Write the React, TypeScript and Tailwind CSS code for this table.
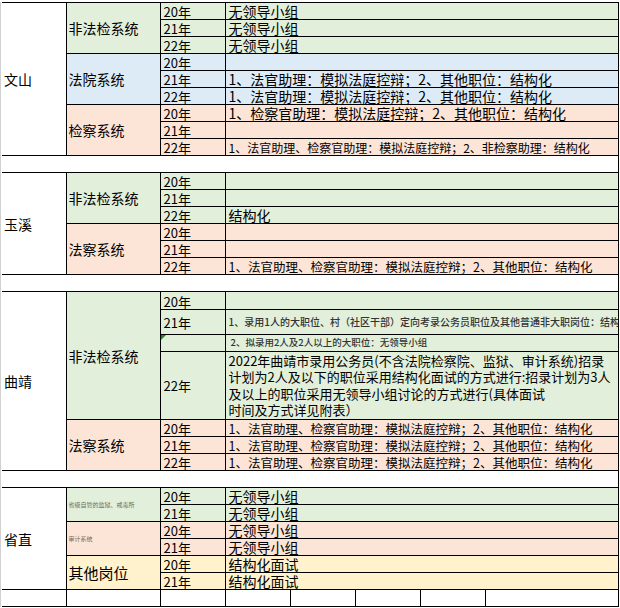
import type { ReactNode } from 'react';

const G = 'bg-[#e2efda]';
const B = 'bg-[#ddebf7]';
const P = 'bg-[#fce4d6]';
const Y = 'bg-[#fff2cc]';

type CellProps = {
  children?: ReactNode;
  className?: string;
  rowSpan?: number;
  colSpan?: number;
};

function Td({ children, className = '', rowSpan, colSpan }: CellProps) {
  return (
    <td
      rowSpan={rowSpan}
      colSpan={colSpan}
      className={`border border-black p-0 whitespace-nowrap overflow-hidden ${className}`}
    >
      {children}
    </td>
  );
}

// region name, first column
function Region({ name, rows }: { name: string; rows: number }) {
  return (
    <Td rowSpan={rows} className="border-l-0 bg-white align-middle pl-[2px] text-[14px] leading-none">
      {name}
    </Td>
  );
}

function Sys({ name, rows, bg, className = 'text-[14px]' }: { name: string; rows: number; bg: string; className?: string }) {
  return (
    <Td rowSpan={rows} className={`${bg} align-middle pl-[2px] leading-none ${className}`}>
      {name}
    </Td>
  );
}

function Year({ y, bg }: { y: string; bg: string }) {
  return <Td className={`${bg} align-bottom pl-[3px] text-[13px] leading-[15px]`}>{y}</Td>;
}

function Text({ t, bg, size = 'text-[14px]' }: { t?: string; bg: string; size?: string }) {
  return (
    <Td colSpan={5} className={`${bg} align-bottom pl-[3px] leading-[15px] max-w-0 ${size}`}>
      {t}
    </Td>
  );
}

function Blank() {
  return (
    <tr className="h-[17px]">
      <td colSpan={8} className="border-t border-b border-r border-black bg-white p-0" />
    </tr>
  );
}

const A1 = '1、法官助理：模拟法庭控辩；2、其他职位：结构化';
const A2 = '1、检察官助理：模拟法庭控辩；2、其他职位：结构化';
const A3 = '1、法官助理、检察官助理：模拟法庭控辩；2、其他职位：结构化';

export default function App() {
  return (
    <div className="w-[620px] h-[608px] bg-white pt-[2px] font-['Noto_Sans_CJK_SC',sans-serif] text-black">
      <div className="border-l border-[#d0d0d0] pl-[1px] w-[618px]">
        <table className="table-fixed border-collapse w-[616px]">
          <colgroup>
            <col className="w-[64px]" />
            <col className="w-[94px]" />
            <col className="w-[65px]" />
            <col className="w-[65px]" />
            <col className="w-[65px]" />
            <col className="w-[65px]" />
            <col className="w-[65px]" />
            <col className="w-[133px]" />
          </colgroup>
          <tbody>
            {/* 文山 */}
            <tr className="h-[17px]">
              <Region name="文山" rows={9} />
              <Sys name="非法检系统" rows={3} bg={G} />
              <Year y="20年" bg={G} />
              <Text t="无领导小组" bg={G} />
            </tr>
            <tr className="h-[17px]">
              <Year y="21年" bg={G} />
              <Text t="无领导小组" bg={G} />
            </tr>
            <tr className="h-[17px]">
              <Year y="22年" bg={G} />
              <Text t="无领导小组" bg={G} />
            </tr>
            <tr className="h-[17px]">
              <Sys name="法院系统" rows={3} bg={B} />
              <Year y="20年" bg={B} />
              <Text bg={B} />
            </tr>
            <tr className="h-[17px]">
              <Year y="21年" bg={B} />
              <Text t={A1} bg={B} />
            </tr>
            <tr className="h-[17px]">
              <Year y="22年" bg={B} />
              <Text t={A1} bg={B} />
            </tr>
            <tr className="h-[17px]">
              <Sys name="检察系统" rows={3} bg={P} />
              <Year y="20年" bg={P} />
              <Text t={A2} bg={P} />
            </tr>
            <tr className="h-[17px]">
              <Year y="21年" bg={P} />
              <Text bg={P} />
            </tr>
            <tr className="h-[17px]">
              <Year y="22年" bg={P} />
              <Text t="1、法官助理、检察官助理：模拟法庭控辩；2、非检察助理：结构化" bg={P} size="text-[12px]" />
            </tr>
            <Blank />

            {/* 玉溪 */}
            <tr className="h-[17px]">
              <Region name="玉溪" rows={6} />
              <Sys name="非法检系统" rows={3} bg={G} />
              <Year y="20年" bg={G} />
              <Text bg={G} />
            </tr>
            <tr className="h-[17px]">
              <Year y="21年" bg={G} />
              <Text bg={G} />
            </tr>
            <tr className="h-[17px]">
              <Year y="22年" bg={G} />
              <Text t="结构化" bg={G} />
            </tr>
            <tr className="h-[17px]">
              <Sys name="法察系统" rows={3} bg={P} />
              <Year y="20年" bg={P} />
              <Text bg={P} />
            </tr>
            <tr className="h-[17px]">
              <Year y="21年" bg={P} />
              <Text bg={P} />
            </tr>
            <tr className="h-[17px]">
              <Year y="22年" bg={P} />
              <Text t={A3} bg={P} size="text-[12.5px]" />
            </tr>
            <Blank />

            {/* 曲靖 */}
            <tr className="h-[18px]">
              <Region name="曲靖" rows={7} />
              <Sys name="非法检系统" rows={4} bg={G} />
              <Year y="20年" bg={G} />
              <Text bg={G} />
            </tr>
            <tr className="h-[25px]">
              <Td className={`${G} align-middle pl-[3px] text-[13px] leading-[15px]`}>21年</Td>
              <Td colSpan={5} className={`${G} align-middle pl-[3px] max-w-0 text-[10px] leading-none text-[#333] font-medium`}>
                1、录用1人的大职位、村（社区干部）定向考录公务员职位及其他普通非大职岗位：结构化
              </Td>
            </tr>
            <tr className="h-[17px]">
              <Td className={`${G} relative`}>
                <span className="absolute left-0 top-0 border-t-[5px] border-r-[5px] border-t-[#1f8a1f] border-r-transparent" />
              </Td>
              <Td colSpan={5} className={`${G} align-middle pl-[5px] max-w-0 text-[9.5px] leading-none text-[#333] font-medium`}>
                2、拟录用2人及2人以上的大职位：无领导小组
              </Td>
            </tr>
            <tr className="h-[68px]">
              <Td className={`${G} align-middle pl-[3px] text-[13px] leading-[15px]`}>22年</Td>
              <Td colSpan={5} className={`${G} align-middle pl-[3px] max-w-0 text-[13px] leading-[16.5px]`}>
                <div className="flex flex-col">
                  <span>2022年曲靖市录用公务员(不含法院检察院、监狱、审计系统)招录</span>
                  <span>计划为2人及以下的职位采用结构化面试的方式进行:招录计划为3人</span>
                  <span>及以上的职位采用无领导小组讨论的方式进行(具体面试</span>
                  <span>时间及方式详见附表）</span>
                </div>
              </Td>
            </tr>
            <tr className="h-[17px]">
              <Sys name="法察系统" rows={3} bg={P} />
              <Year y="20年" bg={P} />
              <Text t={A3} bg={P} size="text-[12.5px]" />
            </tr>
            <tr className="h-[17px]">
              <Year y="21年" bg={P} />
              <Text t={A3} bg={P} size="text-[12.5px]" />
            </tr>
            <tr className="h-[17px]">
              <Year y="22年" bg={P} />
              <Text t={A3} bg={P} size="text-[12.5px]" />
            </tr>
            <Blank />

            {/* 省直 */}
            <tr className="h-[17px]">
              <Region name="省直" rows={6} />
              <Sys name="省级自管的监狱、戒毒所" rows={2} bg={G} className="text-[6px] text-[#6b6b5a]" />
              <Year y="20年" bg={G} />
              <Text t="无领导小组" bg={G} />
            </tr>
            <tr className="h-[17px]">
              <Year y="21年" bg={G} />
              <Text t="无领导小组" bg={G} />
            </tr>
            <tr className="h-[17px]">
              <Sys name="审计系统" rows={2} bg={P} className="text-[6px] text-[#7a6a5a]" />
              <Year y="20年" bg={P} />
              <Text t="无领导小组" bg={P} />
            </tr>
            <tr className="h-[17px]">
              <Year y="21年" bg={P} />
              <Text t="无领导小组" bg={P} />
            </tr>
            <tr className="h-[17px]">
              <Sys name="其他岗位" rows={2} bg={Y} className="text-[15px]" />
              <Year y="20年" bg={Y} />
              <Text t="结构化面试" bg={Y} />
            </tr>
            <tr className="h-[17px]">
              <Year y="21年" bg={Y} />
              <Text t="结构化面试" bg={Y} />
            </tr>

            {/* empty bottom row */}
            <tr className="h-[17px]">
              <Td className="border-l-0 bg-white" />
              <Td className="bg-white" />
              <Td className="bg-white" />
              <Td className="bg-white" />
              <Td className="bg-white" />
              <Td className="bg-white" />
              <Td className="bg-white" />
              <Td className="bg-white" />
            </tr>
          </tbody>
        </table>
      </div>
    </div>
  );
}
